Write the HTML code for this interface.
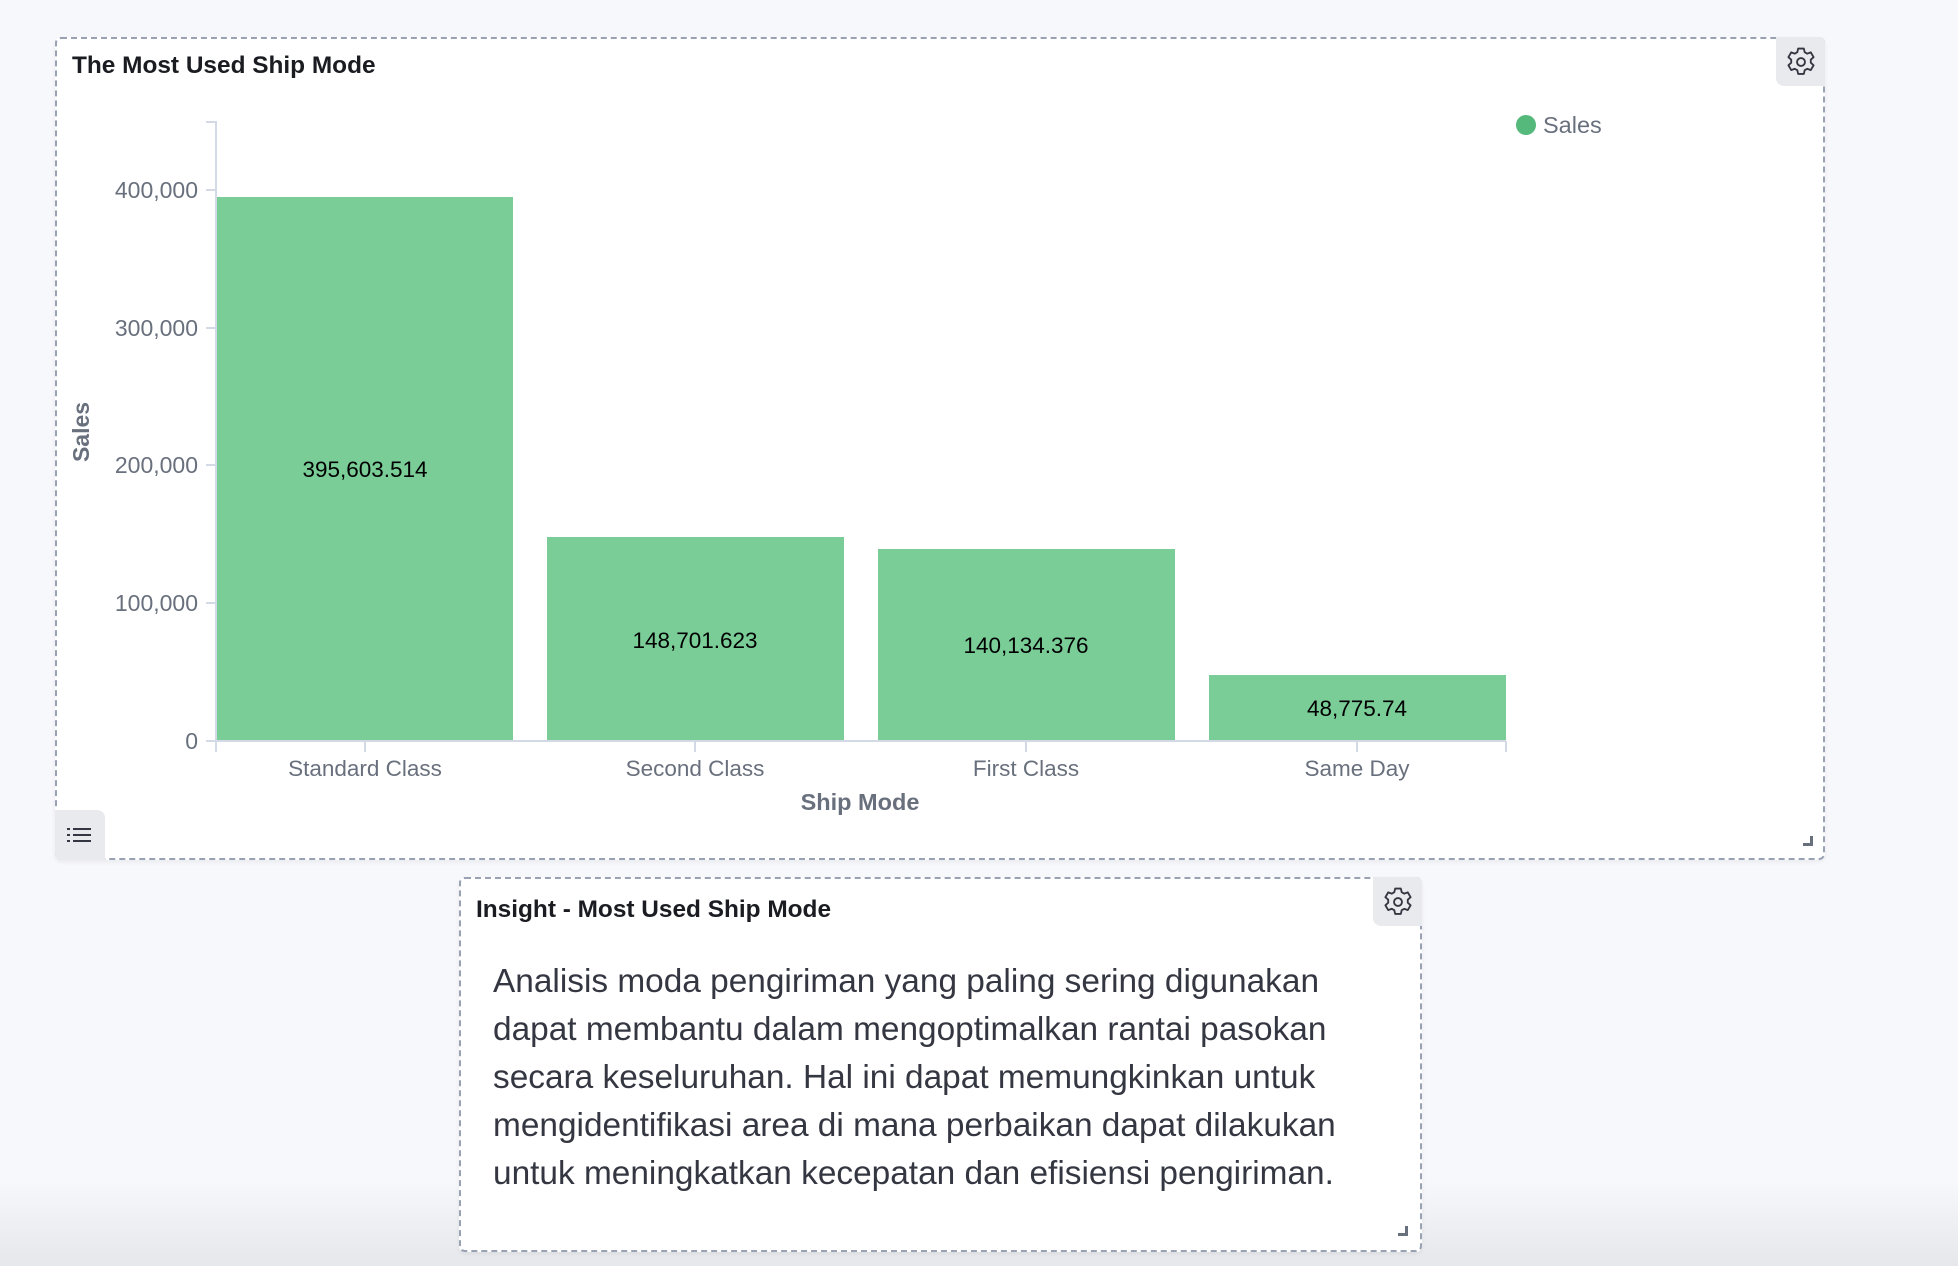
<!DOCTYPE html>
<html><head><meta charset="utf-8"><style>
*{margin:0;padding:0;box-sizing:border-box}
body{width:1958px;height:1266px;background:#f7f8fc;position:relative;overflow:hidden;font-family:"Liberation Sans",sans-serif}
.fade{position:absolute;left:0;right:0;top:1180px;height:86px;background:linear-gradient(#f7f8fc,#e6e7ea)}
.panel{position:absolute;background:#fff;border:2px dashed #98a2b3;border-radius:6px;box-shadow:0 2px 4px rgba(0,0,0,.06)}
.gear{position:absolute;right:-2px;top:-2px;width:49px;height:49px;background:#e9eaed;border-radius:0 6px 0 8px;display:flex;align-items:center;justify-content:center}
.t{position:absolute;white-space:nowrap}
</style></head><body>
<div class="fade"></div>

<div class="panel" style="left:55px;top:37px;width:1770px;height:823px">
  <div class="gear"><svg width="34" height="34" viewBox="0 0 24 24" fill="none" stroke="#343741" stroke-width="1.3" stroke-linejoin="round"><path d="M10 2.5h4l.6 2.6 1.8 1 2.5-.9 2 3.4-2 1.8v2.1l2 1.8-2 3.4-2.5-.9-1.8 1-.6 2.6h-4l-.6-2.6-1.8-1-2.5.9-2-3.4 2-1.8v-2.1l-2-1.8 2-3.4 2.5.9 1.8-1z"/><circle cx="12" cy="12" r="2.8"/></svg></div>
  <div style="position:absolute;left:-2px;bottom:-2px;width:50px;height:50px;background:#e9eaed;border-radius:0 8px 0 6px">
    <svg width="50" height="50" viewBox="0 0 50 50"><g fill="#343741"><rect x="12" y="18" width="3" height="2"/><rect x="18" y="18" width="18" height="2"/><rect x="12" y="24" width="3" height="2"/><rect x="18" y="24" width="18" height="2"/><rect x="12" y="30" width="3" height="2"/><rect x="18" y="30" width="18" height="2"/></g></svg>
  </div>
  <div style="position:absolute;right:10px;bottom:12px;width:10px;height:10px;border-right:3px solid #69707d;border-bottom:3px solid #69707d"></div>
</div>
<div class="t" style="left:72px;top:52px;font-size:24.4px;font-weight:bold;color:#1a1c21">The Most Used Ship Mode</div>

<svg style="position:absolute;left:0;top:0" width="1958" height="900">
  <g stroke="#d3dae6" stroke-width="2">
    <line x1="216" y1="121" x2="216" y2="752"/>
    <line x1="206" y1="122" x2="216" y2="122"/>
    <line x1="206" y1="190" x2="216" y2="190"/>
    <line x1="206" y1="328" x2="216" y2="328"/>
    <line x1="206" y1="465" x2="216" y2="465"/>
    <line x1="206" y1="603" x2="216" y2="603"/>
    <line x1="206" y1="741" x2="1506" y2="741"/>
    <line x1="365" y1="741" x2="365" y2="752"/>
    <line x1="695" y1="741" x2="695" y2="752"/>
    <line x1="1026" y1="741" x2="1026" y2="752"/>
    <line x1="1357" y1="741" x2="1357" y2="752"/>
    <line x1="1506" y1="741" x2="1506" y2="752"/>
  </g>
  <g fill="#7acd97">
    <rect x="217" y="197" width="296" height="543"/>
    <rect x="547" y="537" width="297" height="203"/>
    <rect x="878" y="549" width="297" height="191"/>
    <rect x="1209" y="675" width="297" height="65"/>
  </g>
  <g font-family="Liberation Sans" font-size="23" fill="#69707d" text-anchor="end">
    <text x="198" y="198">400,000</text><text x="198" y="336">300,000</text><text x="198" y="473">200,000</text><text x="198" y="611">100,000</text><text x="198" y="749">0</text>
  </g>
  <g font-family="Liberation Sans" font-size="22.5" fill="#69707d" text-anchor="middle">
    <text x="365" y="776">Standard Class</text><text x="695" y="776">Second Class</text><text x="1026" y="776">First Class</text><text x="1357" y="776">Same Day</text>
  </g>
  <g font-family="Liberation Sans" font-size="22.5" fill="#000" text-anchor="middle">
    <text x="365" y="477">395,603.514</text><text x="695" y="648">148,701.623</text><text x="1026" y="653">140,134.376</text><text x="1357" y="716">48,775.74</text>
  </g>
  <text x="860" y="810" font-family="Liberation Sans" font-size="23.5" font-weight="bold" fill="#69707d" text-anchor="middle">Ship Mode</text>
  <text transform="translate(89,432) rotate(-90)" font-family="Liberation Sans" font-size="23" font-weight="bold" fill="#69707d" text-anchor="middle">Sales</text>
  <circle cx="1526" cy="125" r="10" fill="#54b97b"/>
  <text x="1543" y="133" font-family="Liberation Sans" font-size="23.5" fill="#69707d">Sales</text>
</svg>

<div class="panel" style="left:459px;top:877px;width:963px;height:375px">
  <div class="gear"><svg width="34" height="34" viewBox="0 0 24 24" fill="none" stroke="#343741" stroke-width="1.3" stroke-linejoin="round"><path d="M10 2.5h4l.6 2.6 1.8 1 2.5-.9 2 3.4-2 1.8v2.1l2 1.8-2 3.4-2.5-.9-1.8 1-.6 2.6h-4l-.6-2.6-1.8-1-2.5.9-2-3.4 2-1.8v-2.1l-2-1.8 2-3.4 2.5.9 1.8-1z"/><circle cx="12" cy="12" r="2.8"/></svg></div>
  <div style="position:absolute;right:12px;bottom:14px;width:10px;height:10px;border-right:3px solid #69707d;border-bottom:3px solid #69707d"></div>
  <div class="t" style="left:15px;top:17px;font-size:24.4px;font-weight:bold;color:#1a1c21">Insight - Most Used Ship Mode</div>
  <div style="position:absolute;left:32px;top:79px;font-size:33.4px;line-height:48px;color:#343741;white-space:nowrap">Analisis moda pengiriman yang paling sering digunakan<br>dapat membantu dalam mengoptimalkan rantai pasokan<br>secara keseluruhan. Hal ini dapat memungkinkan untuk<br>mengidentifikasi area di mana perbaikan dapat dilakukan<br>untuk meningkatkan kecepatan dan efisiensi pengiriman.</div>
</div>
</body></html>
